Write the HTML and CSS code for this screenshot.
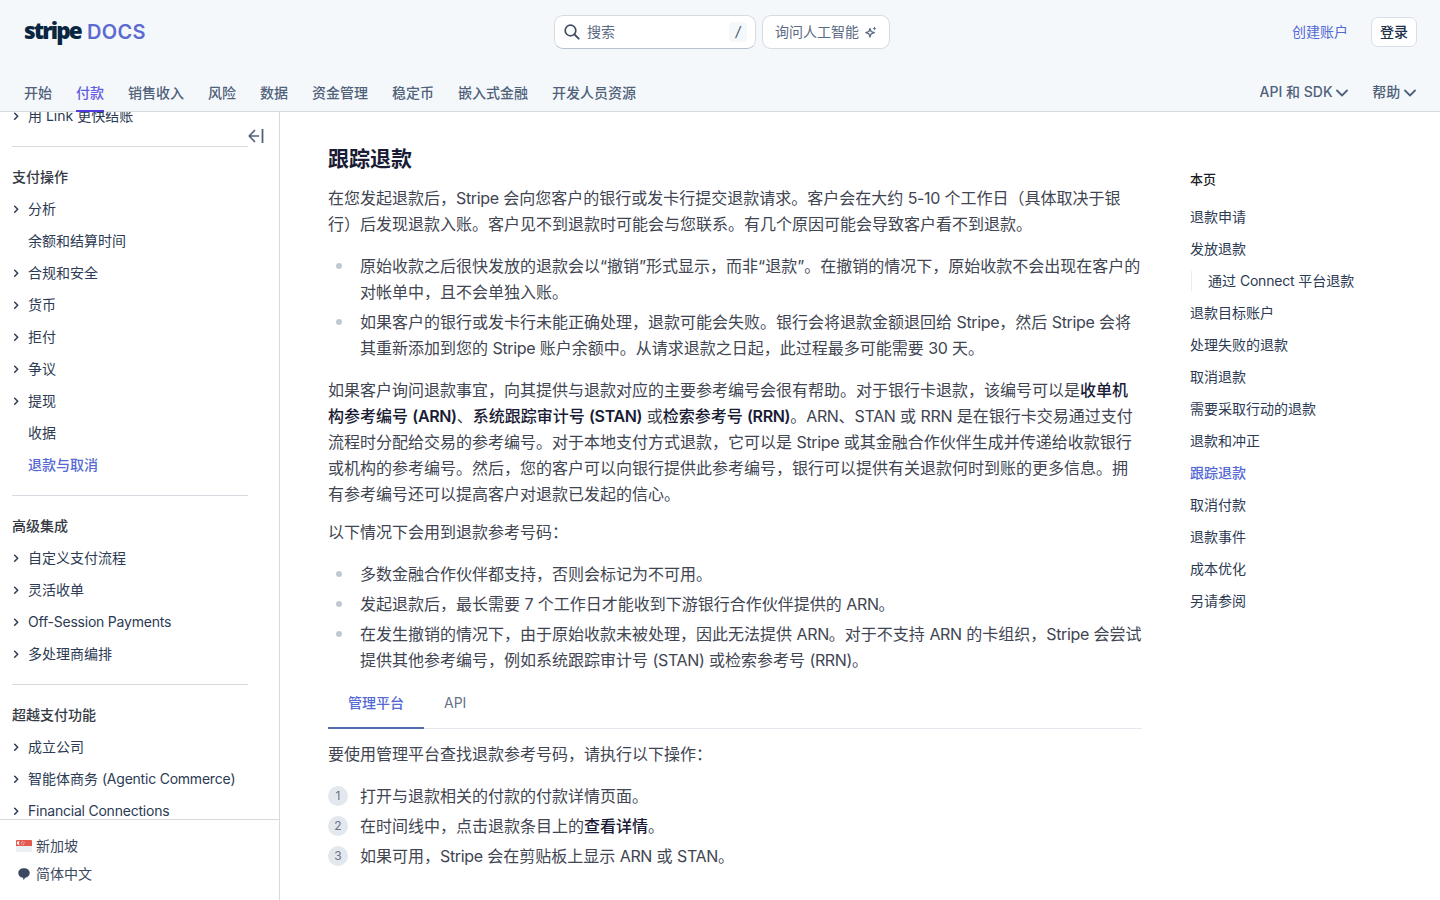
FILE: index.html
```html
<!DOCTYPE html>
<html lang="zh-Hans">
<head>
    <meta charset="utf-8" />
    <title>退款和取消付款 | Stripe 文档</title>
    <link rel="stylesheet" href="styles.css">
</head>
<body>
    <svg class="sprite" width="0" height="0">
        <symbol id="arrow" viewBox="0 0 8 8"><path d="M2.700 1.200l3 3-3 3" fill="none" stroke="currentColor" stroke-width="1.5" stroke-linecap="round" stroke-linejoin="round"/></symbol>
        <symbol id="down" viewBox="0 0 12 8"><path d="M1 1.5l5 5 5-5" fill="none" stroke="currentColor" stroke-width="1.8" stroke-linecap="round" stroke-linejoin="round"/></symbol>
    </svg>

    <header class="header">
        <div class="header-top">
            <a class="logo"><span class="logo-stripe">stripe</span><span class="logo-docs">DOCS</span></a>
            <div class="search-area">
                <div class="search">
                    <svg width="16" height="16" viewBox="0 0 16 16"><circle cx="6.5" cy="6.5" r="5.3" fill="none" stroke="currentColor" stroke-width="1.7"/><path d="M10.5 10.5l4.2 4.2" stroke="currentColor" stroke-width="1.9" stroke-linecap="round"/></svg>
                    <span class="search-text">搜索</span>
                    <span class="key">/</span>
                </div>
                <div class="ask">
                    <span>询问人工智能</span>
                    <svg width="12" height="12" viewBox="0 0 12 12"><path d="M5 2.5l1.1 3L9.300 6.700 6.100 7.900 5 11 3.900 7.900.8 6.700l3.100-1.200z" fill="none" stroke="currentColor" stroke-width="1.3" stroke-linejoin="round"/><path d="M9.5.3l.6 1.600 1.600.6-1.600.6-.6 1.600-.6-1.600-1.600-.6 1.600-.6z" fill="currentColor"/></svg>
                </div>
            </div>
            <div class="account">
                <a class="create">创建账户</a>
                <a class="login">登录</a>
            </div>
        </div>
        <nav class="tabs-nav">
            <a>开始</a>
            <a class="active">付款</a>
            <a>销售收入</a>
            <a>风险</a>
            <a>数据</a>
            <a>资金管理</a>
            <a>稳定币</a>
            <a>嵌入式金融</a>
            <a>开发人员资源</a>
            <div class="menus">
                <span>API 和 SDK <svg width="12" height="8"><use href="#down"/></svg></span>
                <span>帮助 <svg width="12" height="8"><use href="#down"/></svg></span>
            </div>
        </nav>
    </header>

    <div class="page">
        <aside class="sidebar">
            <button class="collapse"><svg width="16" height="14" viewBox="0 0 16 14"><path d="M6.5 1.5L1.2 7l5.3 5.5M1.4 7h9" fill="none" stroke="currentColor" stroke-width="1.7" stroke-linecap="round" stroke-linejoin="round"/><path d="M14.5 0v14" stroke="currentColor" stroke-width="1.8"/></svg></button>
            <div class="sidebar-scroll">
                <div class="section">
                    <a class="item"><svg width="8" height="8"><use href="#arrow"/></svg>用 Link 更快结账</a>
                </div>
                <div class="section">
                    <h4>支付操作</h4>
                    <a class="item"><svg width="8" height="8"><use href="#arrow"/></svg>分析</a>
                    <a class="item leaf">余额和结算时间</a>
                    <a class="item"><svg width="8" height="8"><use href="#arrow"/></svg>合规和安全</a>
                    <a class="item"><svg width="8" height="8"><use href="#arrow"/></svg>货币</a>
                    <a class="item"><svg width="8" height="8"><use href="#arrow"/></svg>拒付</a>
                    <a class="item"><svg width="8" height="8"><use href="#arrow"/></svg>争议</a>
                    <a class="item"><svg width="8" height="8"><use href="#arrow"/></svg>提现</a>
                    <a class="item leaf">收据</a>
                    <a class="item leaf current">退款与取消</a>
                </div>
                <div class="section">
                    <h4>高级集成</h4>
                    <a class="item"><svg width="8" height="8"><use href="#arrow"/></svg>自定义支付流程</a>
                    <a class="item"><svg width="8" height="8"><use href="#arrow"/></svg>灵活收单</a>
                    <a class="item"><svg width="8" height="8"><use href="#arrow"/></svg><span class="en">Off-Session Payments</span></a>
                    <a class="item"><svg width="8" height="8"><use href="#arrow"/></svg>多处理商编排</a>
                </div>
                <div class="section">
                    <h4>超越支付功能</h4>
                    <a class="item"><svg width="8" height="8"><use href="#arrow"/></svg>成立公司</a>
                    <a class="item"><svg width="8" height="8"><use href="#arrow"/></svg><span>智能体商务 <span class="en">(Agentic Commerce)</span></span></a>
                    <a class="item"><svg width="8" height="8"><use href="#arrow"/></svg><span class="en">Financial Connections</span></a>
                </div>
            </div>
            <div class="locale">
                <div><svg width="16" height="12" viewBox="0 0 16 12"><rect width="16" height="12" rx="1" fill="#eceff4"/><path d="M0 6V1a1 1 0 0 1 1-1h14a1 1 0 0 1 1 1v5z" fill="#e25950"/><path d="M3.6 1.5a1.8 1.8 0 1 0 0 3 2 2 0 0 1 0-3z" fill="#fff"/><path d="M5 2.6h.8M6.3 1.6h.8M7.8 2.6h.8M5.6 4.2h.8M7.2 4.2h.8" stroke="#fff" stroke-width=".8"/></svg>新加坡</div>
                <div><svg width="16" height="12" viewBox="0 0 16 12"><path d="M8 .3c3.300 0 5.700 2 5.700 4.700 0 2.500-1.700 4.200-4.400 4.700L7.500 11.900 7 9.800C4.200 9.400 2.300 7.500 2.300 5 2.300 2.300 4.700.3 8 .3z" fill="currentColor"/></svg>简体中文</div>
            </div>
        </aside>

        <main class="content">
            <h2>跟踪退款</h2>
            <p>在您发起退款后，<span class="en">Stripe</span> 会向您客户的银行或发卡行提交退款请求。客户会在大约 <span class="en">5-10</span> 个工作日（具体取决于银行）后发现退款入账。客户见不到退款时可能会与您联系。有几个原因可能会导致客户看不到退款。</p>
            <ul>
                <li>原始收款之后很快发放的退款会以“撤销”形式显示，而非“退款”。在撤销的情况下，原始收款不会出现在客户的对帐单中，且不会单独入账。</li>
                <li>如果客户的银行或发卡行未能正确处理，退款可能会失败。银行会将退款金额退回给 <span class="en">Stripe</span>，然后 <span class="en">Stripe</span> 会将其重新添加到您的 <span class="en">Stripe</span> 账户余额中。从请求退款之日起，此过程最多可能需要 <span class="en">30</span> 天。</li>
            </ul>
            <p>如果客户询问退款事宜，向其提供与退款对应的主要参考编号会很有帮助。对于银行卡退款，该编号可以是<b>收单机构参考编号 <span class="en">(ARN)</span></b>、<b>系统跟踪审计号 <span class="en">(STAN)</span></b> 或<b>检索参考号 <span class="en">(RRN)</span></b>。<span class="en">ARN</span>、<span class="en">STAN</span> 或 <span class="en">RRN</span> 是在银行卡交易通过支付流程时分配给交易的参考编号。对于本地支付方式退款，它可以是 <span class="en">Stripe</span> 或其金融合作伙伴生成并传递给收款银行或机构的参考编号。然后，您的客户可以向银行提供此参考编号，银行可以提供有关退款何时到账的更多信息。拥有参考编号还可以提高客户对退款已发起的信心。</p>
            <p class="next">以下情况下会用到退款参考号码：</p>
            <ul>
                <li>多数金融合作伙伴都支持，否则会标记为不可用。</li>
                <li>发起退款后，最长需要 <span class="en">7</span> 个工作日才能收到下游银行合作伙伴提供的 <span class="en">ARN</span>。</li>
                <li>在发生撤销的情况下，由于原始收款未被处理，因此无法提供 <span class="en">ARN</span>。对于不支持 <span class="en">ARN</span> 的卡组织，<span class="en">Stripe</span> 会尝试提供其他参考编号，例如系统跟踪审计号 <span class="en">(STAN)</span> 或检索参考号 <span class="en">(RRN)</span>。</li>
            </ul>
            <div class="tabs">
                <a class="tab selected">管理平台</a>
                <a class="tab">API</a>
            </div>
            <p class="next">要使用管理平台查找退款参考号码，请执行以下操作：</p>
            <ol>
                <li>打开与退款相关的付款的付款详情页面。</li>
                <li>在时间线中，点击退款条目上的<b>查看详情</b>。</li>
                <li>如果可用，<span class="en">Stripe</span> 会在剪贴板上显示 <span class="en">ARN</span> 或 <span class="en">STAN</span>。</li>
            </ol>
        </main>

        <aside class="toc">
            <h5>本页</h5>
            <a>退款申请</a>
            <a>发放退款</a>
            <a class="sub">通过 <span class="en">Connect</span> 平台退款</a>
            <a>退款目标账户</a>
            <a>处理失败的退款</a>
            <a>取消退款</a>
            <a>需要采取行动的退款</a>
            <a>退款和冲正</a>
            <a class="current">跟踪退款</a>
            <a>取消付款</a>
            <a>退款事件</a>
            <a>成本优化</a>
            <a>另请参阅</a>
        </aside>
    </div>
</body>
</html>
```
FILE: styles.css
```css
* {
    box-sizing: border-box;
}

body {
    margin: 0;
    height: 900px;
    overflow: hidden;
    display: flex;
    flex-direction: column;
    font-family: Inter, "Noto Sans CJK SC", sans-serif;
    font-size: 14px;
    color: #414552;
    background-color: #fff;
    text-spacing-trim: space-all;
}

h2, h4, h5, p, ul, ol {
    margin: 0;
    padding: 0;
}

svg {
    flex-shrink: 0;
}

.sprite {
    display: none;
}

.en {
    letter-spacing: -0.22px;
}

/* header */
.header {
    height: 112px;
    flex-shrink: 0;
    background-color: #f5f8fb;
    border-bottom: 1px solid #d5dbe1;
}

.header-top {
    height: 64px;
    padding: 0 23px 0 24px;
    display: grid;
    grid-template-columns: 530px 1fr auto;
    align-items: center;
}

.logo {
    display: flex;
    align-items: center;
    line-height: 30px;
}

.logo-stripe {
    width: 63px;
    margin-top: -3px;
    font-family: "Open Sans", sans-serif;
    font-weight: 800;
    font-stretch: 90%;
    font-size: 22.5px;
    letter-spacing: -1.9px;
    color: #0a2540;
}

.logo-docs {
    font-weight: 600;
    font-size: 20px;
    letter-spacing: 0.3px;
    color: #5b6bd0;
}

.search-area {
    display: flex;
    gap: 6px;
}

.search, .ask {
    height: 34px;
    display: flex;
    align-items: center;
    line-height: 20px;
    padding-bottom: 1px;
    background-color: #fff;
    border: 1px solid #d5dbe1;
    border-radius: 9px;
    color: #5a6b83;
}

.search {
    width: 202px;
    padding-left: 9px;
    padding-right: 8px;
    border-bottom-color: #b6c1cd;
}

.search svg {
    color: #414e63;
}

.search-text {
    flex: 1;
    padding-left: 7px;
}

.key {
    width: 18px;
    line-height: 20px;
    text-align: center;
    font-style: italic;
    color: #414e63;
    background-color: #f5f8fb;
    border-radius: 4px;
}

.ask {
    width: 128px;
    padding-left: 12px;
    gap: 6px;
}

.account {
    display: flex;
    align-items: center;
    gap: 23px;
}

.create {
    padding-bottom: 2px;
    color: #5469d4;
}

.login {
    width: 46px;
    line-height: 28px;
    text-align: center;
    font-weight: 500;
    color: #21304a;
    background-color: #fff;
    border: 1px solid #d8deea;
    border-radius: 7px;
}

.tabs-nav {
    height: 48px;
    padding: 0 24px;
    display: flex;
    gap: 24px;
    line-height: 58px;
    font-weight: 500;
    color: #50617a;
}

.tabs-nav .active {
    color: #635bdf;
    border-bottom: 2px solid #533ae0;
}

.menus {
    margin-left: auto;
    display: flex;
    gap: 24px;
    line-height: 56px;
}

/* left sidebar */
.page {
    flex: 1;
    min-height: 0;
    display: flex;
}

.sidebar {
    position: relative;
    width: 280px;
    display: flex;
    flex-direction: column;
    border-right: 1px solid #d5dbe1;
}

.sidebar-scroll {
    flex: 1;
    min-height: 0;
    overflow: hidden;
    padding-left: 12px;
}

.collapse {
    position: absolute;
    top: 17px;
    left: 248px;
    width: 16px;
    height: 14px;
    padding: 0;
    border: none;
    background: none;
    color: #50617a;
    line-height: 0;
}

.section {
    width: 236px;
    padding: 14px 0;
    border-bottom: 1px solid #d5dbe1;
}

.section:first-child {
    margin-top: -26px;
}

.section:last-child {
    border-bottom: none;
}

.section h4 {
    line-height: 32px;
    font-size: 14px;
    font-weight: 500;
    color: #353a44;
}

.item {
    height: 32px;
    padding-bottom: 1px;
    display: flex;
    align-items: center;
    gap: 8px;
    line-height: 20px;
    white-space: nowrap;
    color: #2c3a53;
}

.leaf {
    padding-left: 16px;
}

.item.current, .toc .current {
    color: #5469d4;
    font-weight: 500;
}

.locale {
    height: 81px;
    padding: 12px 16px;
    border-top: 1px solid #d5dbe1;
    color: #3c4860;
}

.locale div {
    height: 28px;
    padding-bottom: 1px;
    display: flex;
    align-items: center;
    gap: 4px;
    line-height: 20px;
}

/* article */
.content {
    width: 814px;
    margin-left: 48px;
    padding-top: 32px;
    font-size: 16px;
    line-height: 26px;
    flex-shrink: 0;
}

.content .en {
    letter-spacing: -0.35px;
}

h2 {
    font-size: 21px;
    line-height: 30px;
    font-weight: 600;
    color: #1a1b35;
    margin-bottom: 11px;
}

b {
    font-weight: 500;
    color: #1a1b35;
}

b .en {
    font-weight: 600;
}

.next {
    margin-top: 12px;
}

ul, ol {
    margin: 16px 0;
    list-style: none;
}

li {
    position: relative;
    padding-left: 32px;
    margin-bottom: 4px;
}

ul li::before {
    content: "";
    position: absolute;
    left: 8px;
    top: 10px;
    width: 6px;
    height: 6px;
    border-radius: 50%;
    background-color: #c0c8d2;
}

ol {
    counter-reset: step;
}

ol li::before {
    counter-increment: step;
    content: counter(step);
    position: absolute;
    left: 0;
    top: 3px;
    width: 20px;
    height: 20px;
    border-radius: 50%;
    background-color: #e3e8ee;
    color: #697386;
    font-size: 12px;
    line-height: 20px;
    text-align: center;
}

.tabs {
    height: 52px;
    display: flex;
    border-bottom: 1px solid #e3e8ee;
    font-size: 14px;
    line-height: 52px;
    margin-top: -12px;
}

.tab {
    height: 52px;
    padding: 0 20px;
    color: #687385;
}

.selected {
    color: #5469d4;
    font-weight: 500;
    border-bottom: 2px solid #5469b4;
}

/* on this page */
.toc {
    margin-left: 48px;
    padding-top: 51px;
}

.toc h5 {
    font-size: 13px;
    font-weight: 500;
    line-height: 32px;
    margin-bottom: 6px;
    color: #1a1b25;
}

.toc a {
    display: block;
    line-height: 32px;
    color: #2c3a53;
}

.toc .sub {
    line-height: 20px;
    margin: 6px 0 6px 1px;
    padding-left: 16px;
    border-left: 1px solid #ebeef1;
}
```
